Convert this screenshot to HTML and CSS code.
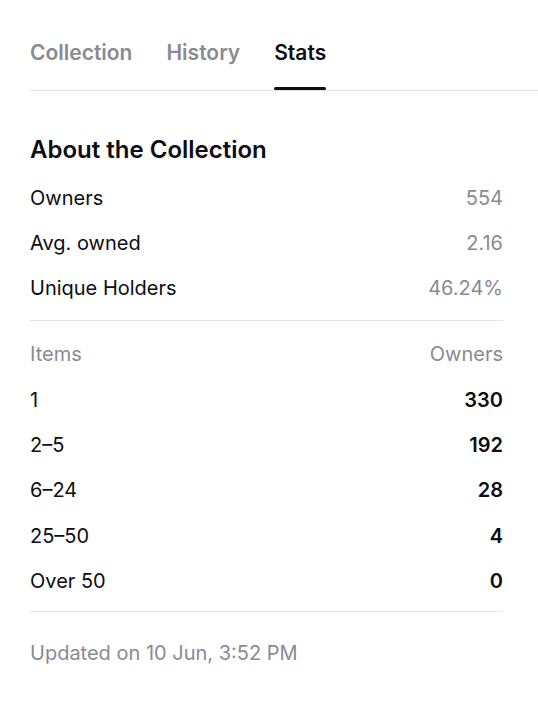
FILE: index.html
```html
<!DOCTYPE html>
<html>
<head>
<meta charset="utf-8">
<link rel="stylesheet" href="styles.css">
</head>
<body>
<div class="page">
  <nav class="tabs">
    <div class="tab">Collection</div>
    <div class="tab">History</div>
    <div class="tab active">Stats</div>
  </nav>
  <section class="content">
    <h2 class="title">About the Collection</h2>
    <div class="group">
      <div class="row"><span>Owners</span><span class="muted">554</span></div>
      <div class="row"><span>Avg. owned</span><span class="muted">2.16</span></div>
      <div class="row"><span>Unique Holders</span><span class="muted">46.24%</span></div>
    </div>
    <hr class="divider first">
    <div class="group">
      <div class="row head"><span>Items</span><span>Owners</span></div>
      <div class="row"><span>1</span><span class="strong">330</span></div>
      <div class="row"><span>2–5</span><span class="strong">192</span></div>
      <div class="row"><span>6–24</span><span class="strong">28</span></div>
      <div class="row"><span>25–50</span><span class="strong">4</span></div>
      <div class="row"><span>Over 50</span><span class="strong">0</span></div>
    </div>
    <hr class="divider last">
    <p class="updated">Updated on 10 Jun, 3:52 PM</p>
  </section>
</div>
</body>
</html>
```
FILE: styles.css
```css
* { box-sizing: border-box; }
body {
  margin: 0;
  background: #fff;
  font-family: Inter, "Noto Sans", sans-serif;
  color: #0d0d12;
}
.page {
  padding: 39px 0 0 30px;
}
.tabs {
  display: flex;
  gap: 34px;
  border-bottom: 1px solid #e3e3e6;
}
.tab {
  font-size: 21px;
  font-weight: 600;
  line-height: 28px;
  padding-bottom: 23px;
  color: #8a8a93;
  position: relative;
}
.tab.active { color: #0d0d12; }
.tab.active::after {
  content: "";
  position: absolute;
  left: 0;
  right: 0;
  bottom: 0;
  height: 3px;
  border-radius: 2px;
  background: #0d0d12;
}
.content {
  width: 473px;
  padding-top: 43px;
}
.title {
  margin: 0 0 9px;
  font-size: 24px;
  font-weight: 600;
  line-height: 32px;
}
.row {
  display: flex;
  justify-content: space-between;
  font-size: 20px;
  line-height: 28px;
  padding: 8.65px 0;
}
.muted { color: #8a8a93; }
.head { color: #8a8a93; }
.strong { font-weight: 600; }
.divider {
  border: 0;
  border-top: 1px solid #e3e3e6;
}
.divider.first { margin: 9px 0 11px; }
.divider.last { margin: 7px 0 0; }
.updated {
  margin: 27px 0 0;
  font-size: 20px;
  line-height: 28px;
  color: #8a8a93;
}
```
